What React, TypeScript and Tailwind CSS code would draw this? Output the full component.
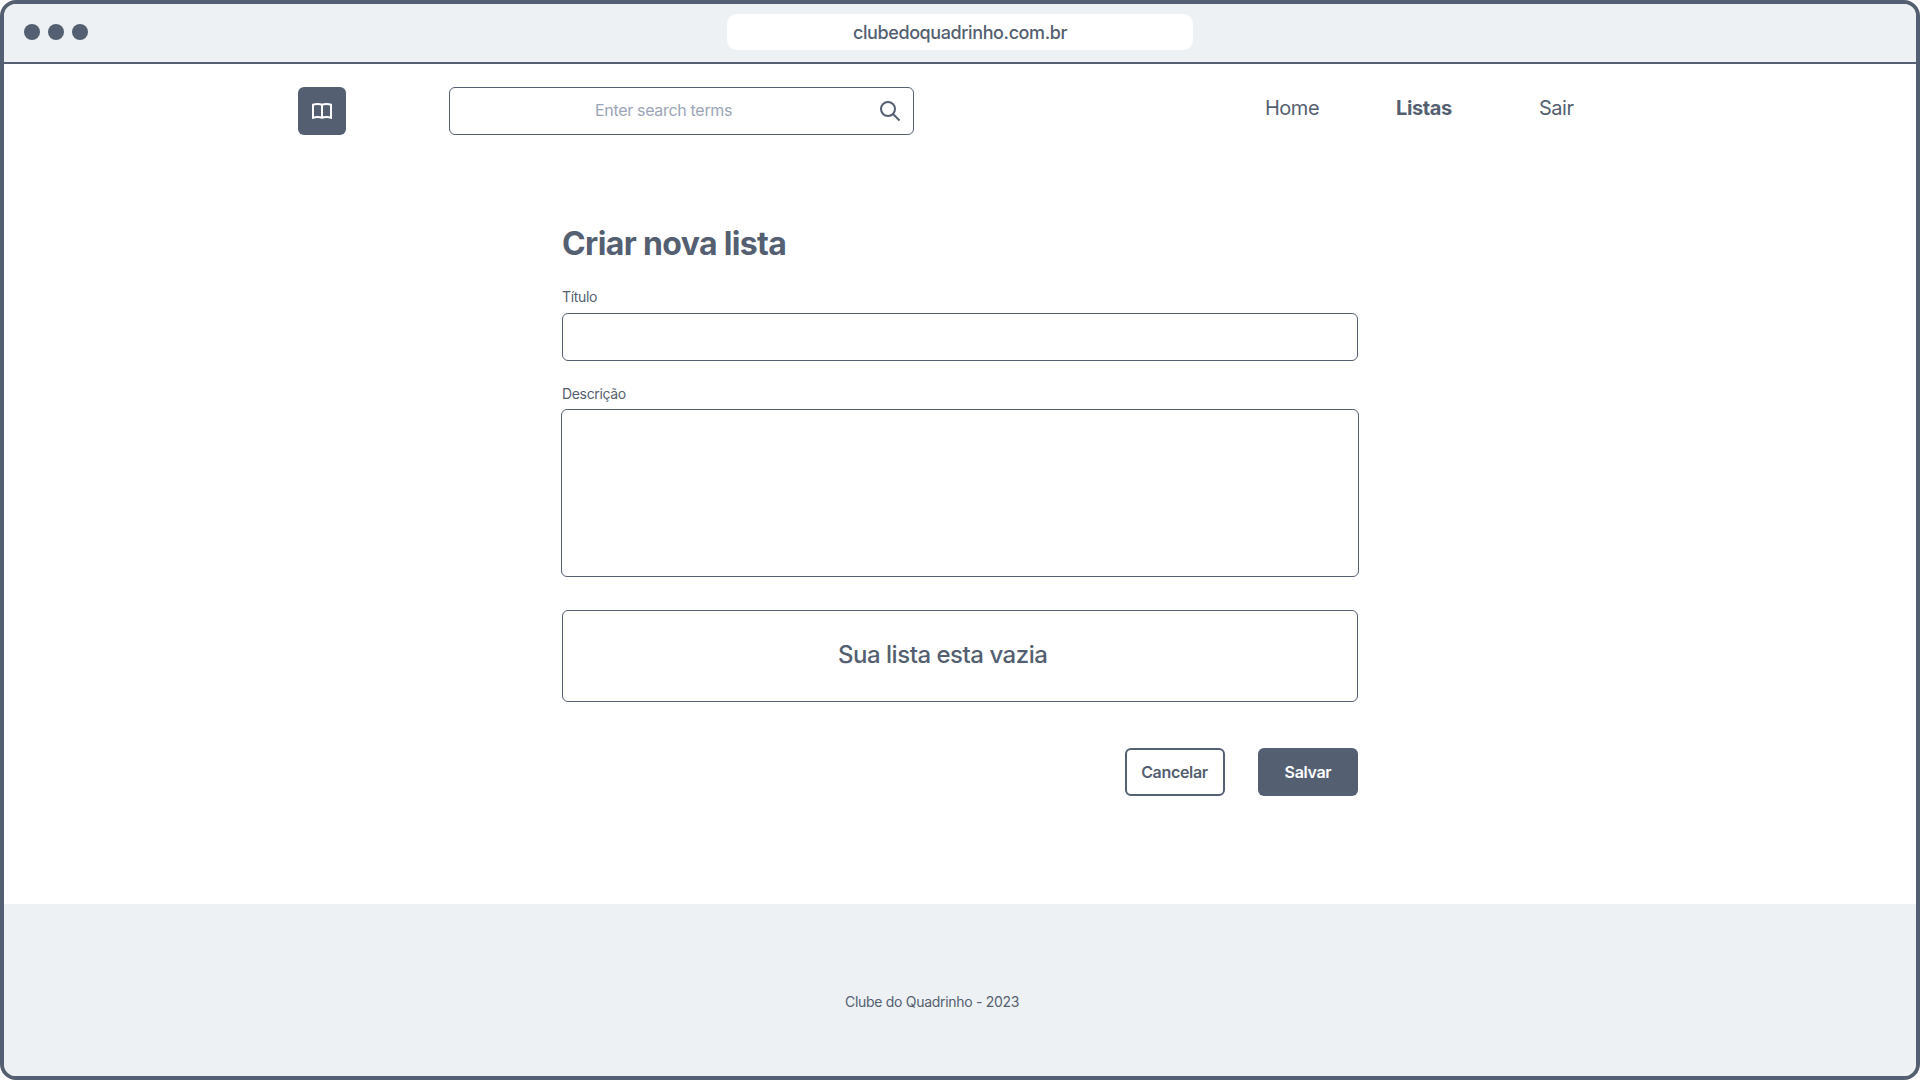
function BrowserBar() {
  return (
    <div className="flex h-[60px] shrink-0 items-start border-b-2 border-[#545f71] bg-[#edf1f4]">
      <div className="mt-5 ml-5 flex w-[703px] gap-2">
        <span className="size-4 rounded-full bg-[#545f71]" />
        <span className="size-4 rounded-full bg-[#545f71]" />
        <span className="size-4 rounded-full bg-[#545f71]" />
      </div>
      <div className="mt-2.5 flex h-9 w-[466px] items-center justify-center rounded-[10px] bg-white pt-0.5 text-[18px] leading-6 font-medium tracking-[-0.4px]">
        <span>clubedoquadrinho.com.br</span>
      </div>
    </div>
  );
}

function BookIcon() {
  return (
    <svg width="24" height="24" viewBox="0 0 24 24" fill="none" stroke="white" strokeWidth="2">
      <path d="M12 5.500V18.500M12 5.700C10.500 5.100 9 5 7.500 5C5.800 5 4.400 5.200 3 5.700V18.700C4.400 18.200 5.800 18 7.500 18C9 18 10.500 18.100 12 18.700C13.500 18.100 15 18 16.500 18C18.200 18 19.600 18.200 21 18.700V5.700C19.600 5.200 18.200 5 16.500 5C15 5 13.500 5.100 12 5.700Z" />
    </svg>
  );
}

function SearchIcon() {
  return (
    <svg width="24" height="24" viewBox="0 0 24 24" fill="none" stroke="#545f71" strokeWidth="2">
      <circle cx="10" cy="10" r="7" />
      <path d="M15 15L21.500 21.500" />
    </svg>
  );
}

function Header() {
  return (
    <header className="flex h-[71px] shrink-0 items-start pt-[23px] pl-[294px]">
      <div className="flex size-12 items-center justify-center rounded-md bg-[#545f71]">
        <BookIcon />
      </div>
      <div className="ml-[103px] flex h-12 w-[465px] items-center justify-between rounded-md border border-[#545f71] pr-[11px] pl-[145px]">
        <span className="pb-0.5 text-[16px] leading-6 tracking-[-0.32px] text-[#9ba5b7]">Enter search terms</span>
        <SearchIcon />
      </div>
      <nav className="ml-[351px] flex pt-1.5 text-[20px] leading-[30px] tracking-[-0.5px]">
        <span className="w-[131px]">Home</span>
        <span className="w-[143px] font-bold tracking-[-0.4px]">Listas</span>
        <span>Sair</span>
      </nav>
    </header>
  );
}

function ListForm() {
  return (
    <main className="ml-[558px] flex w-[796px] grow flex-col pt-[89px]">
      <h1 className="h-10 text-[32px] leading-10 font-bold tracking-[-0.64px]">Criar nova lista</h1>
      <label className="mt-[23px] h-5 text-[14px] leading-5 tracking-[-0.34px]">Título</label>
      <div className="mt-1.5 h-12 rounded-md border border-[#545f71]" />
      <label className="mt-[23px] h-5 text-[14px] leading-5 tracking-[-0.34px]">Descrição</label>
      <div className="-mx-px mt-[5px] h-[168px] rounded-md border border-[#545f71]" />
      <div className="mt-[33px] flex h-[92px] items-center rounded-md border border-[#545f71] pb-0.5 pl-[275px]">
        <p className="text-[24px] leading-8 font-medium tracking-[-0.48px]">Sua lista esta vazia</p>
      </div>
      <div className="mt-[46px] flex justify-end gap-[33px] text-[16px] leading-6 font-semibold tracking-[-0.32px]">
        <button className="h-12 w-[100px] rounded-md border-2 border-[#545f71] pr-px">Cancelar</button>
        <button className="h-12 w-[100px] rounded-md bg-[#545f71] text-white">Salvar</button>
      </div>
    </main>
  );
}

export default function App() {
  return (
    <div className="h-[1080px] w-[1920px] bg-white font-['Inter',sans-serif] text-[#545f71]">
      <div className="flex h-full flex-col overflow-hidden rounded-2xl border-4 border-[#545f71]">
        <BrowserBar />
        <Header />
        <ListForm />
        <footer className="h-[172px] shrink-0 bg-[#edf1f4] pt-[88px] pl-[841px] text-[14px] leading-5 tracking-[-0.3px]">
          Clube do Quadrinho - 2023
        </footer>
      </div>
    </div>
  );
}
